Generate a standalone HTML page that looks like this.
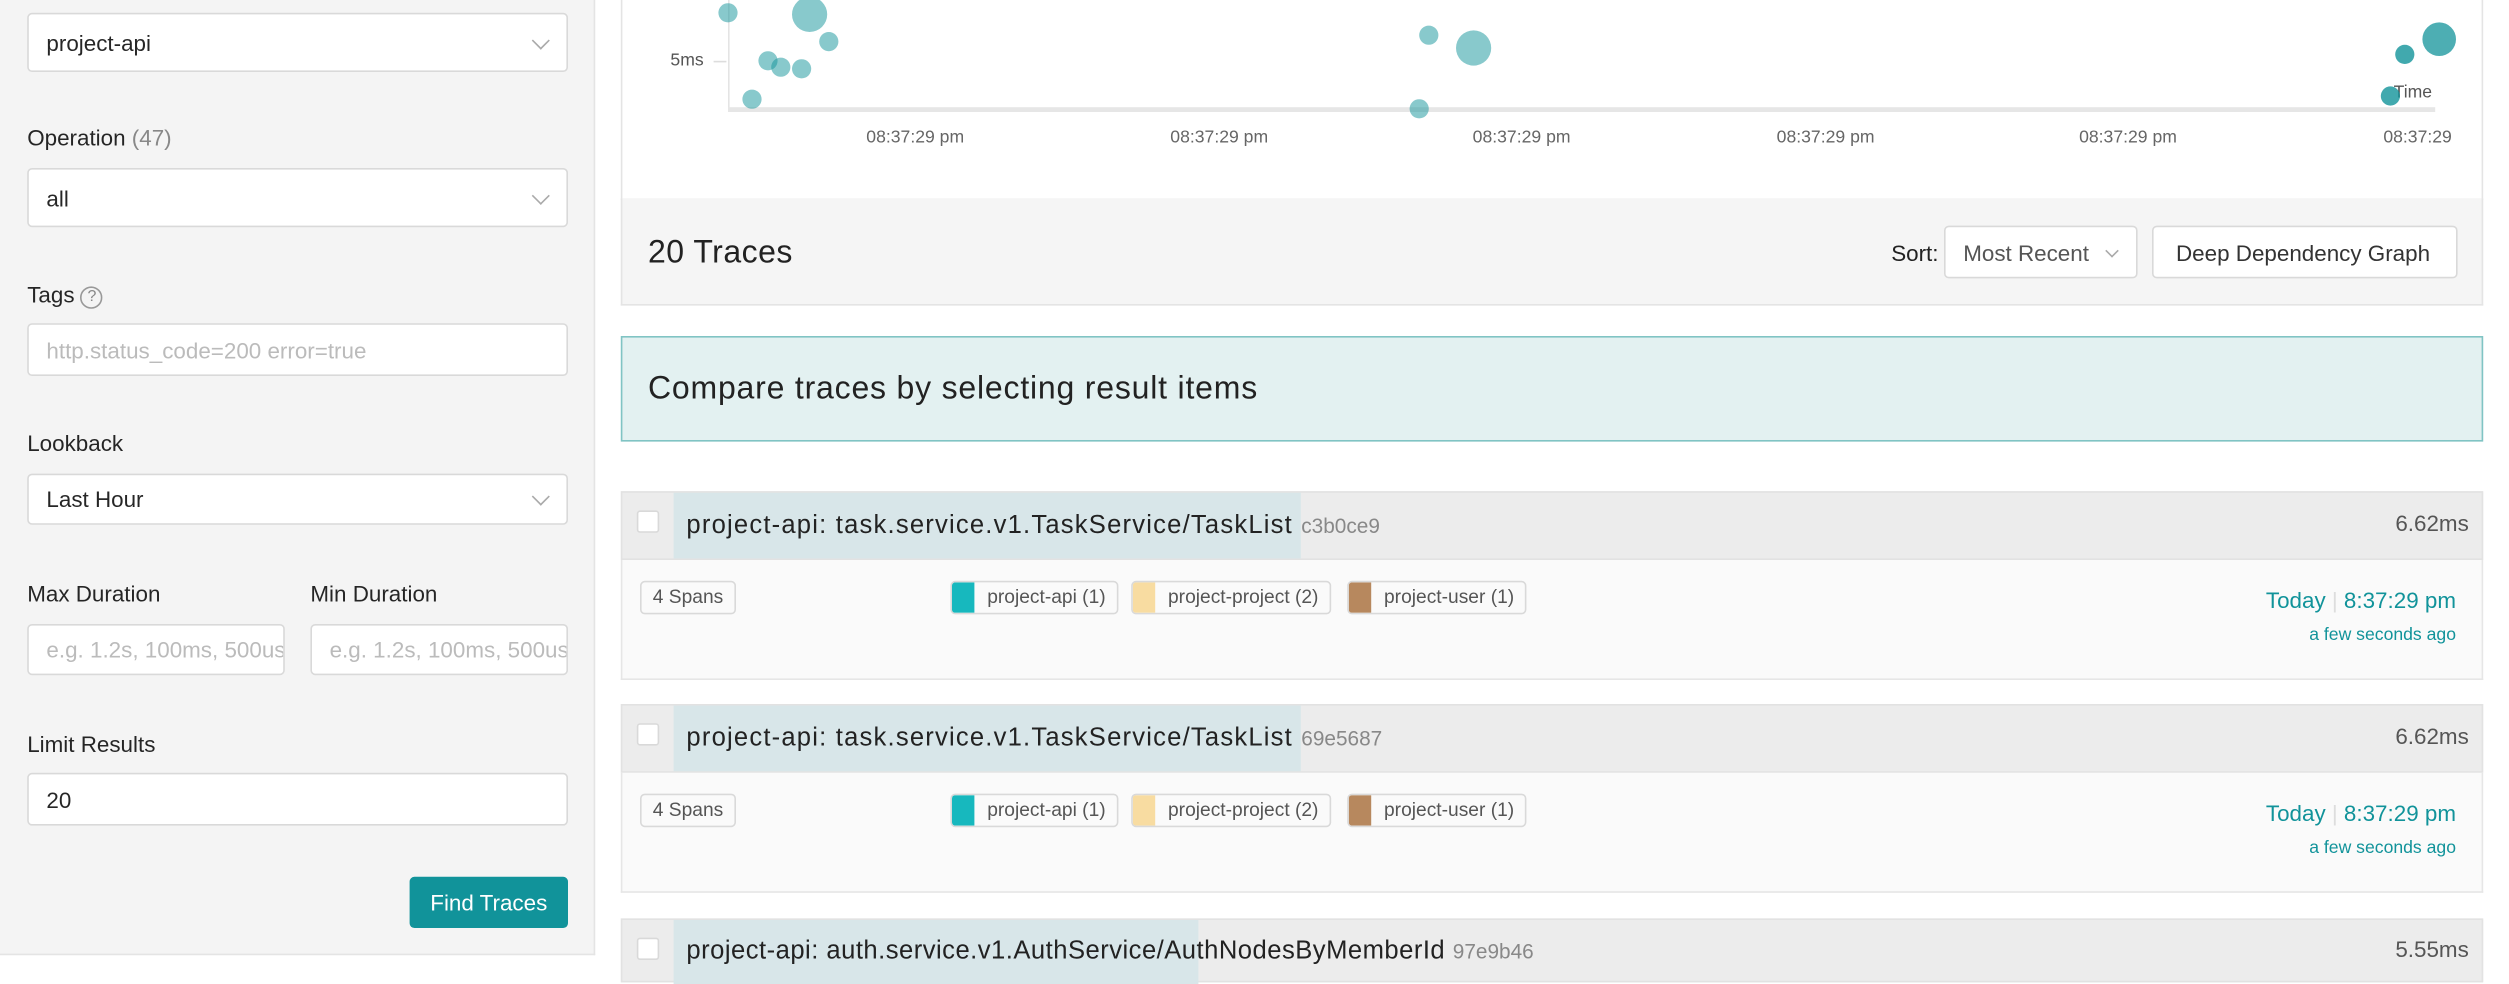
<!DOCTYPE html>
<html><head><meta charset="utf-8"><style>
*{box-sizing:border-box;margin:0;padding:0}
html,body{width:2509px;height:965px;overflow:hidden;background:#fff}
#w{position:absolute;left:0;top:0;width:1552px;height:603px;transform:scale(1.6);transform-origin:0 0;font-family:"Liberation Sans",sans-serif;color:rgba(0,0,0,.85)}
.a{position:absolute}
.side{left:0;top:-2px;width:372px;height:599px;background:#f4f4f4;border-right:1px solid #e4e4e4;border-bottom:1px solid #e4e4e4}
.box{position:absolute;background:#fff;border:1px solid #d9d9d9;border-radius:3px;font-size:14px;padding-left:11px;display:flex;align-items:center}
.ph{color:#bbb}
.chev{position:absolute;right:12px;top:50%;width:8px;height:8px;border-right:1px solid #aaa;border-bottom:1px solid #aaa;transform:translateY(-70%) rotate(45deg)}
.lbl{position:absolute;font-size:14px;color:rgba(0,0,0,.85)}
.dot{position:absolute;border-radius:50%;background:rgba(18,147,154,.5)}
.tick{position:absolute;top:80px;font-size:11px;color:#666;transform:translateX(-50%)}
.th{position:absolute;left:388px;width:1164px;height:43px;background:#ececec;border:1px solid #e2e2e2}
.tb{position:absolute;left:388px;width:1164px;height:75px;background:#fafafa;border:1px solid #e6e6e6;border-top:none}
.tag{position:absolute;height:21px;border:1px solid #d9d9d9;border-radius:3px;background:#fafafa;font-size:12px;color:#555;line-height:19px;padding:0 7px}
.svc{padding-left:22px;overflow:hidden}
.svc i{position:absolute;left:0;top:0;bottom:0;width:14px}
.teal{color:#11939a}
.tt{letter-spacing:.75px}
</style></head><body><div id="w">
<div class="a side"></div>
<div class="box" style="left:17px;top:8px;width:338px;height:37px;font-size:14px">project-api<span class="chev"></span></div>
<div class="lbl" style="left:17px;top:78px">Operation <span style="color:#888">(47)</span></div>
<div class="box" style="left:17px;top:105px;width:338px;height:37px">all<span class="chev"></span></div>
<div class="lbl" style="left:17px;top:176px">Tags <span style="display:inline-block;width:14px;height:14px;border:1px solid #999;border-radius:50%;font-size:10px;text-align:center;line-height:12px;color:#888;vertical-align:1px">?</span></div>
<div class="box" style="left:17px;top:202px;width:338px;height:33px"><span class="ph">http.status_code=200 error=true</span></div>
<div class="lbl" style="left:17px;top:269px">Lookback</div>
<div class="box" style="left:17px;top:296px;width:338px;height:32px">Last Hour<span class="chev"></span></div>
<div class="lbl" style="left:17px;top:363px">Max Duration</div>
<div class="lbl" style="left:194px;top:363px">Min Duration</div>
<div class="box" style="left:17px;top:390px;width:161px;height:32px;overflow:hidden;white-space:nowrap"><span class="ph">e.g. 1.2s, 100ms, 500us</span></div>
<div class="box" style="left:194px;top:390px;width:161px;height:32px;overflow:hidden;white-space:nowrap"><span class="ph">e.g. 1.2s, 100ms, 500us</span></div>
<div class="lbl" style="left:17px;top:457px">Limit Results</div>
<div class="box" style="left:17px;top:483px;width:338px;height:33px">20</div>
<div class="a" style="left:256px;top:548px;width:99px;height:32px;background:#11939a;border-radius:3px;color:#fff;font-size:14px;text-align:center;line-height:32px">Find Traces</div>

<div class="a" style="left:388px;top:-2px;width:1164px;height:127px;border:1px solid #e4e4e4;border-top:none;background:#fff"></div>
<div class="a" style="left:455px;top:0;width:1px;height:69px;background:#e4e4e4"></div>
<div class="a" style="left:455px;top:67px;width:1067px;height:3px;background:#e6e6e6"></div>
<div class="a" style="left:446px;top:38px;width:8px;height:1px;background:#ddd"></div>
<div class="a" style="left:419px;top:32px;font-size:11px;color:#555">5ms</div>
<div class="tick" style="left:572px">08:37:29 pm</div><div class="tick" style="left:762px">08:37:29 pm</div><div class="tick" style="left:951px">08:37:29 pm</div><div class="tick" style="left:1141px">08:37:29 pm</div><div class="tick" style="left:1330px">08:37:29 pm</div><div class="tick" style="left:1511px">08:37:29</div>
<div class="a" style="left:1496px;top:52px;font-size:11px;color:#555">Time</div>
<div class="dot" style="left:449px;top:2px;width:12px;height:12px"></div>
<div class="dot" style="left:495px;top:-2px;width:22px;height:22px"></div>
<div class="dot" style="left:512px;top:20px;width:12px;height:12px"></div>
<div class="dot" style="left:474px;top:32px;width:12px;height:12px"></div>
<div class="dot" style="left:482px;top:36px;width:12px;height:12px"></div>
<div class="dot" style="left:495px;top:37px;width:12px;height:12px"></div>
<div class="dot" style="left:464px;top:56px;width:12px;height:12px"></div>
<div class="dot" style="left:887px;top:16px;width:12px;height:12px"></div>
<div class="dot" style="left:910px;top:19px;width:22px;height:22px"></div>
<div class="dot" style="left:881px;top:62px;width:12px;height:12px"></div>
<div class="dot" style="left:1497px;top:28px;width:12px;height:12px;background:rgba(18,147,154,.8)"></div>
<div class="dot" style="left:1514px;top:14px;width:21px;height:21px;background:rgba(18,147,154,.75)"></div>
<div class="dot" style="left:1488px;top:54px;width:12px;height:12px;background:rgba(18,147,154,.8)"></div>

<div class="a" style="left:388px;top:124px;width:1164px;height:67px;background:#f5f5f5;border:1px solid #e4e4e4;border-top:none"></div>
<div class="a tt" style="left:405px;top:147px;font-size:20px;color:#222;letter-spacing:.3px">20 Traces</div>
<div class="a" style="left:1182px;top:150px;font-size:14px;color:#222">Sort:</div>
<div class="box" style="left:1215px;top:141px;width:121px;height:33px;color:#555">Most Recent<span class="chev" style="width:6px;height:6px"></span></div>
<div class="box" style="left:1345px;top:141px;width:191px;height:33px;color:#333;padding-left:14px">Deep Dependency Graph</div>

<div class="a" style="left:388px;top:210px;width:1164px;height:66px;background:#e3f1f1;border:1px solid #80c4c4"></div>
<div class="a" style="left:405px;top:232px;font-size:20px;color:#222;letter-spacing:.5px">Compare traces by selecting result items</div>

<div class="th" style="top:307px"></div>
<div class="a" style="left:421px;top:308px;width:392px;height:41px;background:#d8e6e9"></div>
<div class="a" style="left:398px;top:319px;width:14px;height:14px;background:#fff;border:1px solid #d9d9d9;border-radius:2px"></div>
<div class="a tt" style="left:429px;top:320px;font-size:16px;color:#222">project-api: task.service.v1.TaskService/TaskList <span style="font-size:13px;color:#888;letter-spacing:0">c3b0ce9</span></div>
<div class="a" style="right:9px;top:319px;font-size:14px;color:#555">6.62ms</div>
<div class="tb" style="top:350px"></div>
<div class="tag" style="left:400px;top:363px">4 Spans</div>
<div class="tag svc" style="left:594px;top:363px">project-api (1)<i style="background:#17b8be"></i></div>
<div class="tag svc" style="left:707px;top:363px">project-project (2)<i style="background:#f8dca1"></i></div>
<div class="tag svc" style="left:842px;top:363px">project-user (1)<i style="background:#b7885e"></i></div>
<div class="a teal" style="right:17px;top:367px;font-size:14px">Today <span style="color:#ddd">|</span> 8:37:29 pm</div>
<div class="a teal" style="right:17px;top:391px;font-size:11px">a few seconds ago</div>

<div class="th" style="top:440px"></div>
<div class="a" style="left:421px;top:441px;width:392px;height:41px;background:#d8e6e9"></div>
<div class="a" style="left:398px;top:452px;width:14px;height:14px;background:#fff;border:1px solid #d9d9d9;border-radius:2px"></div>
<div class="a tt" style="left:429px;top:453px;font-size:16px;color:#222">project-api: task.service.v1.TaskService/TaskList <span style="font-size:13px;color:#888;letter-spacing:0">69e5687</span></div>
<div class="a" style="right:9px;top:452px;font-size:14px;color:#555">6.62ms</div>
<div class="tb" style="top:483px"></div>
<div class="tag" style="left:400px;top:496px">4 Spans</div>
<div class="tag svc" style="left:594px;top:496px">project-api (1)<i style="background:#17b8be"></i></div>
<div class="tag svc" style="left:707px;top:496px">project-project (2)<i style="background:#f8dca1"></i></div>
<div class="tag svc" style="left:842px;top:496px">project-user (1)<i style="background:#b7885e"></i></div>
<div class="a teal" style="right:17px;top:500px;font-size:14px">Today <span style="color:#ddd">|</span> 8:37:29 pm</div>
<div class="a teal" style="right:17px;top:524px;font-size:11px">a few seconds ago</div>

<div class="th" style="top:574px;height:40px"></div>
<div class="a" style="left:421px;top:575px;width:328px;height:40px;background:#d8e6e9"></div>
<div class="a" style="left:398px;top:586px;width:14px;height:14px;background:#fff;border:1px solid #d9d9d9;border-radius:2px"></div>
<div class="a" style="left:429px;top:586px;font-size:16px;color:#222;letter-spacing:.3px">project-api: auth.service.v1.AuthService/AuthNodesByMemberId <span style="font-size:13px;color:#888;letter-spacing:0">97e9b46</span></div>
<div class="a" style="right:9px;top:585px;font-size:14px;color:#555">5.55ms</div>
</div></body></html>
